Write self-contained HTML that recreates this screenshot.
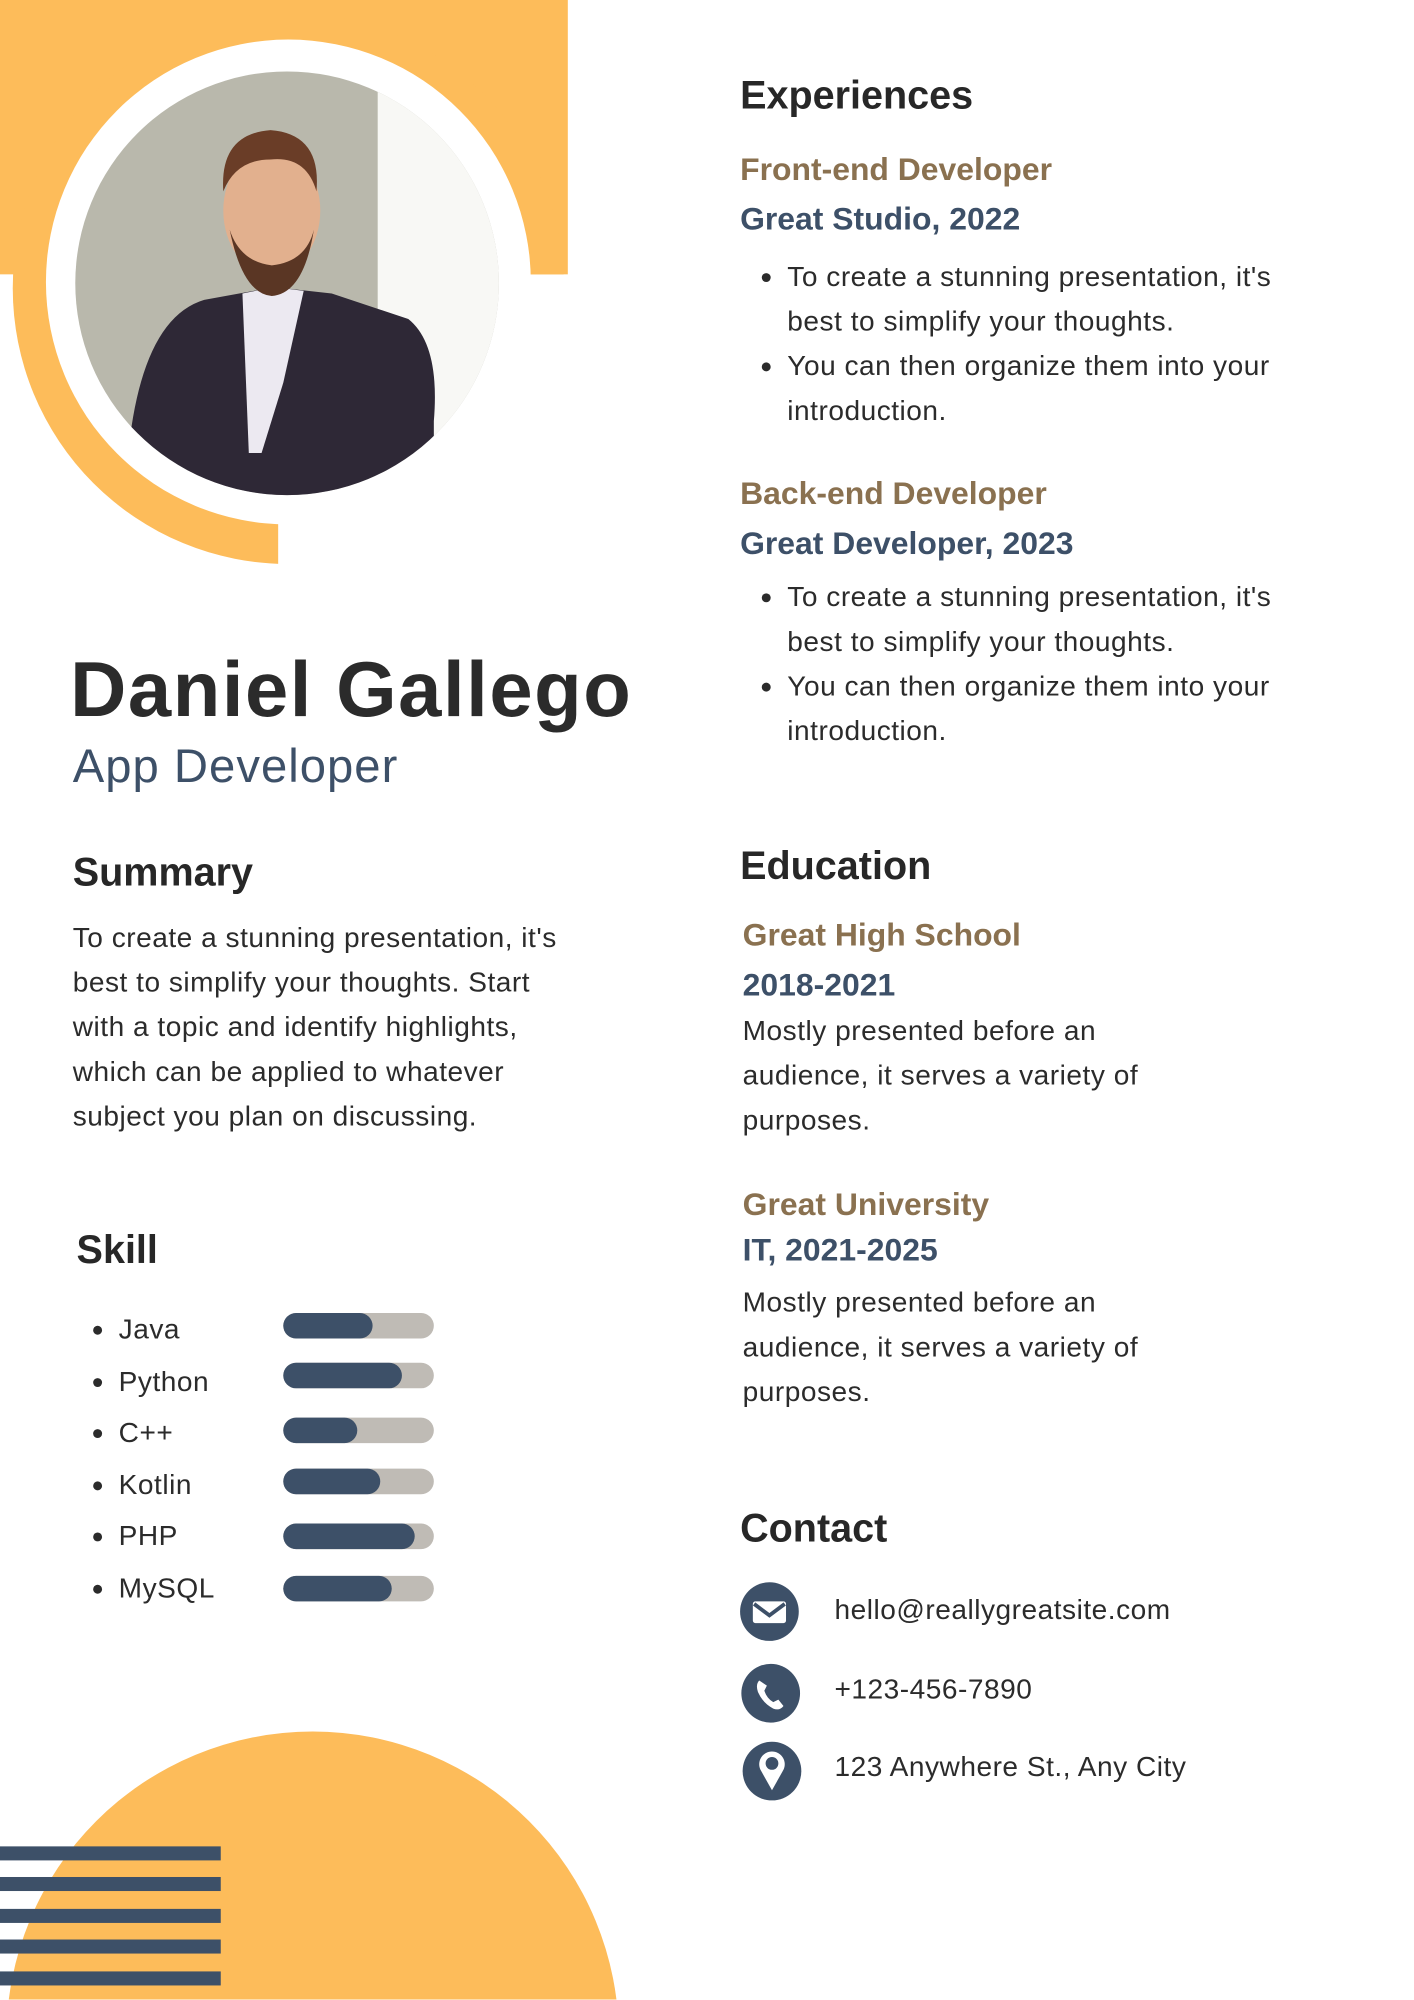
<!DOCTYPE html>
<html><head><meta charset="utf-8"><style>
html,body{margin:0;padding:0;background:#fff;overflow:hidden;width:1414px;height:2000px}
#w{width:1414px;height:2000px;position:relative;overflow:hidden}
#p{position:absolute;left:0;top:0;width:1108px;height:1567px;transform:scale(1.276,1.276);transform-origin:0 0;font-family:"Liberation Sans",sans-serif;color:#2b2b2b}
.a{position:absolute;white-space:nowrap}
.h{font-weight:bold;font-size:31px;line-height:40px;color:#272727}
.t{font-size:22px;line-height:35px;color:#2b2b2b;letter-spacing:0.4px}
.br{font-weight:bold;font-size:25px;line-height:34px;color:#8a7150}
.bl{font-weight:bold;font-size:25px;line-height:34px;color:#3d5068}
ul{margin:0;padding:0 0 0 37px}
li{margin:0}
.bar{position:absolute;left:222px;width:118px;height:20px;border-radius:10px;background:#bfbbb5}
.bar i{display:block;height:20px;border-radius:10px;background:#3d5068}
.ic{position:absolute;width:46px;height:46px;border-radius:50%;background:#3d5068}
</style></head><body><div id="w"><div id="p">
<svg class="a" style="left:0;top:0" width="1100" height="1567">
<defs><clipPath id="c1"><rect x="0" y="0" width="218" height="1556"/><rect x="0" y="0" width="445" height="215"/></clipPath>
<clipPath id="c2"><circle cx="225" cy="222" r="166"/></clipPath></defs>
<rect x="0" y="0" width="445" height="215" fill="#FDBC5A"/>
<circle cx="226" cy="226" r="216" fill="#FDBC5A" clip-path="url(#c1)"/>
<circle cx="226" cy="221" r="190" fill="#fff"/>
<g clip-path="url(#c2)">
<rect x="40" y="40" width="380" height="380" fill="#b9b8ac"/>
<rect x="296" y="70" width="120" height="340" fill="#f8f8f5"/>
<path d="M100 360 Q110 250 160 235 L215 225 L260 230 L320 250 Q345 270 340 330 L340 400 L95 400Z" fill="#2e2836"/>
<path d="M190 230 L215 225 L238 228 L222 300 L205 355 L195 355Z" fill="#ece9f1"/>
<ellipse cx="213" cy="165" rx="38" ry="50" fill="#e2b08e"/>
<path d="M175 150 Q172 105 212 102 Q252 105 248 150 Q240 122 212 125 Q185 125 175 150Z" fill="#6a3d27"/>
<path d="M180 180 Q190 230 213 232 Q238 230 246 180 Q240 205 213 208 Q188 205 180 180Z" fill="#5a3624"/>
</g>
<circle cx="245" cy="1597" r="240" fill="#FDBC5A"/>
<rect x="0" y="1447" width="173" height="11" fill="#3d5068"/>
<rect x="0" y="1471" width="173" height="11" fill="#3d5068"/>
<rect x="0" y="1496" width="173" height="11" fill="#3d5068"/>
<rect x="0" y="1520" width="173" height="11" fill="#3d5068"/>
<rect x="0" y="1545" width="173" height="11" fill="#3d5068"/>
</svg>

<div class="a" style="left:55px;top:505px;font-size:61px;font-weight:bold;line-height:70px;color:#2b2b2b;letter-spacing:1.2px">Daniel Gallego</div>
<div class="a" style="left:57px;top:578px;font-size:37px;line-height:46px;color:#3d5068;letter-spacing:0.8px">App Developer</div>

<div class="a h" style="left:57px;top:664px">Summary</div>
<div class="a t" style="left:57px;top:717px">To create a stunning presentation, it's<br>best to simplify your thoughts. Start<br>with a topic and identify highlights,<br>which can be applied to whatever<br>subject you plan on discussing.</div>

<div class="a h" style="left:60px;top:960px">Skill</div>
<div class="a t" style="left:62px;top:1022px;line-height:40.6px"><ul style="padding-left:31px"><li>Java</li><li>Python</li><li>C++</li><li>Kotlin</li><li>PHP</li><li>MySQL</li></ul></div>
<div class="bar" style="top:1029px"><i style="width:70px"></i></div>
<div class="bar" style="top:1068px"><i style="width:93px"></i></div>
<div class="bar" style="top:1111px"><i style="width:58px"></i></div>
<div class="bar" style="top:1151px"><i style="width:76px"></i></div>
<div class="bar" style="top:1194px"><i style="width:103px"></i></div>
<div class="bar" style="top:1235px"><i style="width:85px"></i></div>

<div class="a h" style="left:580px;top:55px">Experiences</div>
<div class="a br" style="left:580px;top:116px">Front-end Developer</div>
<div class="a bl" style="left:580px;top:155px">Great Studio, 2022</div>
<div class="a t" style="left:580px;top:199px"><ul><li>To create a stunning presentation, it's<br>best to simplify your thoughts.</li><li>You can then organize them into your<br>introduction.</li></ul></div>
<div class="a br" style="left:580px;top:370px">Back-end Developer</div>
<div class="a bl" style="left:580px;top:409px">Great Developer, 2023</div>
<div class="a t" style="left:580px;top:450px"><ul><li>To create a stunning presentation, it's<br>best to simplify your thoughts.</li><li>You can then organize them into your<br>introduction.</li></ul></div>

<div class="a h" style="left:580px;top:659px">Education</div>
<div class="a br" style="left:582px;top:716px">Great High School</div>
<div class="a bl" style="left:582px;top:755px">2018-2021</div>
<div class="a t" style="left:582px;top:790px">Mostly presented before an<br>audience, it serves a variety of<br>purposes.</div>
<div class="a br" style="left:582px;top:927px">Great University</div>
<div class="a bl" style="left:582px;top:963px">IT, 2021-2025</div>
<div class="a t" style="left:582px;top:1003px">Mostly presented before an<br>audience, it serves a variety of<br>purposes.</div>

<div class="a h" style="left:580px;top:1178px">Contact</div>
<div class="ic" style="left:580px;top:1240px"><svg width="46" height="46"><rect x="10" y="15" width="26" height="17" rx="2" fill="#fff"/><path d="M11 17 L23 26 L35 17" stroke="#3d5068" stroke-width="3" fill="none"/></svg></div>
<div class="ic" style="left:581px;top:1304px"><svg width="46" height="46"><path d="M14 13 Q11 16 13 22 Q17 31 25 35 Q30 37 33 33 L29 28 L25 30 Q20 27 18 21 L20 17 Z" fill="#fff"/></svg></div>
<div class="ic" style="left:582px;top:1365px"><svg width="46" height="46"><path d="M23 38 L14 22 A10 10 0 1 1 32 22 Z" fill="#fff"/><circle cx="23" cy="17" r="5" fill="#3d5068"/></svg></div>
<div class="a t" style="left:654px;top:1244px">hello@reallygreatsite.com</div>
<div class="a t" style="left:654px;top:1306px">+123-456-7890</div>
<div class="a t" style="left:654px;top:1367px">123 Anywhere St., Any City</div>
</div></div></body></html>
